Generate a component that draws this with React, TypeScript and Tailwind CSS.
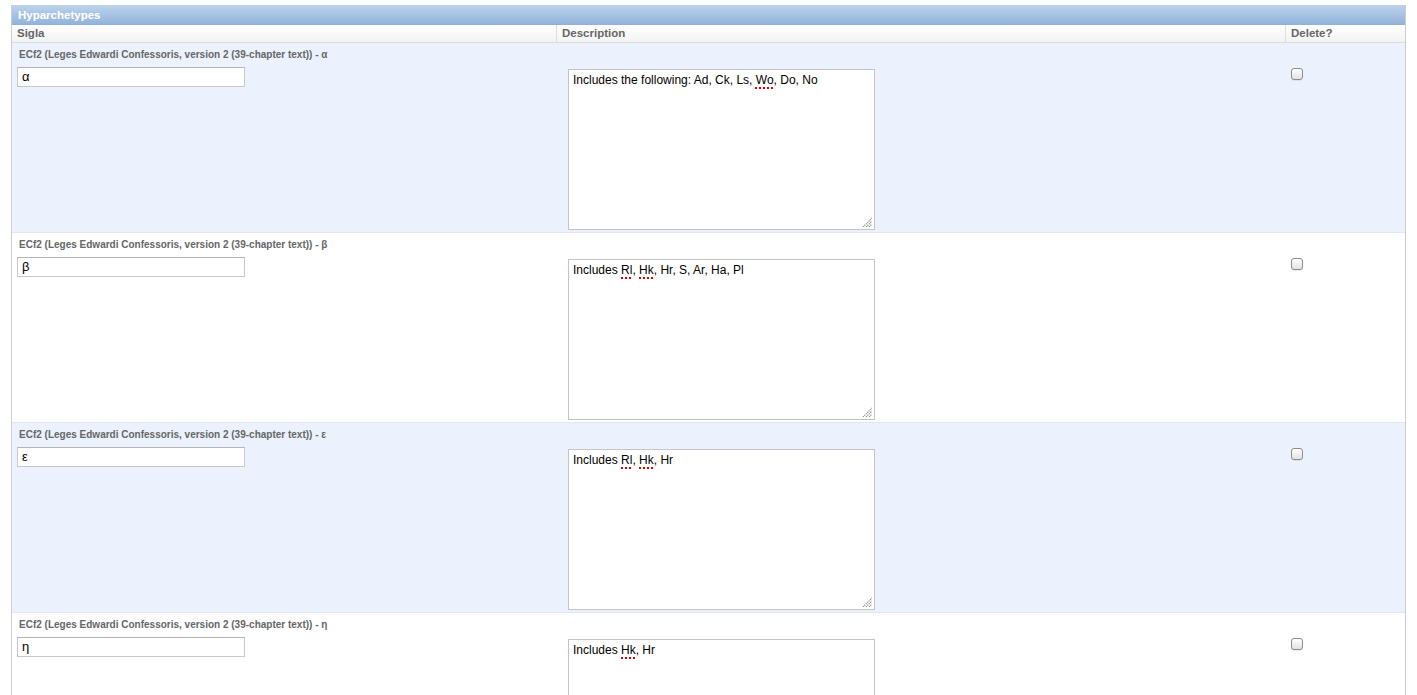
import React from "react";

type Part = string | { sp: string };

const rows: { sig: string; desc: Part[]; blue: boolean }[] = [
  {
    sig: "α",
    desc: ["Includes the following: Ad, Ck, Ls, ", { sp: "Wo" }, ", Do, No"],
    blue: true,
  },
  {
    sig: "β",
    desc: ["Includes ", { sp: "Rl" }, ", ", { sp: "Hk" }, ", Hr, S, Ar, Ha, Pl"],
    blue: false,
  },
  {
    sig: "ε",
    desc: ["Includes ", { sp: "Rl" }, ", ", { sp: "Hk" }, ", Hr"],
    blue: true,
  },
  {
    sig: "η",
    desc: ["Includes ", { sp: "Hk" }, ", Hr"],
    blue: false,
  },
];

function ResizeHandle() {
  return (
    <svg
      className="absolute right-[2px] bottom-[2px]"
      width="10"
      height="10"
      viewBox="0 0 10 10"
    >
      <g stroke="#8a8a8a" strokeWidth="1.1" strokeDasharray="1.2 0.8">
        <line x1="1" y1="10" x2="10" y2="1" />
        <line x1="4" y1="10" x2="10" y2="4" />
        <line x1="7" y1="10" x2="10" y2="7" />
      </g>
    </svg>
  );
}

function Row({ sig, desc, blue }: { sig: string; desc: Part[]; blue: boolean }) {
  return (
    <div
      className={`flex flex-col pt-[6px] pb-[2px] border-b border-[#e3e8ef] ${
        blue ? "bg-[#ecf2fd]" : "bg-white"
      }`}
    >
      <div className="pl-[7px] h-[12px] leading-[12px] text-[10px] font-bold text-[#666] whitespace-nowrap">
        ECf2 (Leges Edwardi Confessoris, version 2 (39-chapter text)) - {sig}
      </div>
      <div className="mt-[6px] grid grid-cols-[544px_729px_1fr] items-start">
        <div className="pl-[5px]">
          <div className="w-[228px] h-[20px] border border-[#c8c8c8] border-t-[#b5b5b5] bg-white pl-[4px] text-[13px] leading-[18px] text-black">
            {sig}
          </div>
        </div>
        <div className="pl-[12px] pt-[2px]">
          <div className="relative w-[307px] h-[161px] border border-[#c4c4c4] bg-white px-[4px] pt-[3px] text-[12px] leading-[14px] text-black">
            {desc.map((p, i) =>
              typeof p === "string" ? (
                <span key={i}>{p}</span>
              ) : (
                <span
                  key={i}
                  className="underline decoration-dotted decoration-[#e00000] decoration-[2px] underline-offset-[3px]"
                >
                  {p.sp}
                </span>
              )
            )}
            <ResizeHandle />
          </div>
        </div>
        <div className="pl-[6px] pt-[1px]">
          <div className="w-[12px] h-[12px] rounded-[3px] border border-[#8c8c8c] bg-gradient-to-b from-white to-[#e2e2e2] shadow-[0_0.5px_0.5px_rgba(0,0,0,0.15)]" />
        </div>
      </div>
    </div>
  );
}

export default function App() {
  return (
    <div
      className="w-[1417px] h-[695px] overflow-hidden bg-white pt-[5px] px-[11px]"
      style={{ fontFamily: '"Liberation Sans", Arial, sans-serif' }}
    >
      <div className="border-x border-[#cccccc]">
        <div className="h-[20px] bg-gradient-to-b from-[#bdd3ed] to-[#90b2da] pl-[6px] text-[11.5px] leading-[20px] font-bold text-white">
          Hyparchetypes
        </div>
        <div className="grid grid-cols-[544px_729px_1fr] h-[18px] bg-gradient-to-b from-white to-[#f3f3f3] border-b border-[#dcdcdc] text-[11.5px] leading-[17px] font-bold text-[#666]">
          <div className="pl-[5px]">Sigla</div>
          <div className="pl-[5px] border-l border-[#dedede]">Description</div>
          <div className="pl-[5px] border-l border-[#dedede]">Delete?</div>
        </div>
        {rows.map((r, i) => (
          <Row key={i} {...r} />
        ))}
      </div>
    </div>
  );
}
